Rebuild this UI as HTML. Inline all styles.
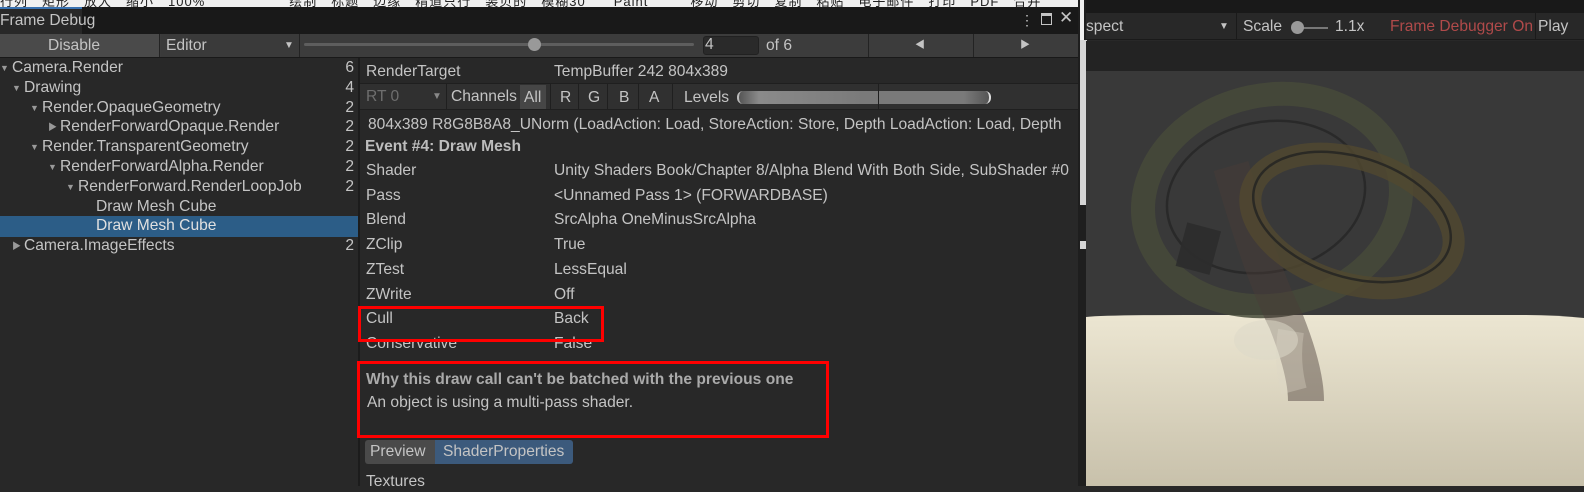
<!DOCTYPE html>
<html><head><meta charset="utf-8"><style>
*{margin:0;padding:0;box-sizing:border-box}
body{width:1584px;height:486px;overflow:hidden;background:#282828;font-family:"Liberation Sans","Noto Sans CJK SC",sans-serif;font-size:15.6px;color:#c4c4c4;position:relative}
.a{position:absolute;white-space:nowrap}
.t{line-height:20px}
.tr>div{height:19.8px;line-height:20px;overflow:hidden}
.ar{font-size:9px;color:#999;display:inline-block;width:12px;vertical-align:top;line-height:20px}
</style></head><body>
<div class="a" style="left:0;top:0;width:1080px;height:7px;background:#f0f0f0;overflow:hidden"><div class="a" style="left:0;top:-9px;font-size:13px;color:#222;letter-spacing:1px">行列　矩形　放大　缩小　100%　　　　　　绘制　标题　边缘　精道只行　装贝的　模糊30　　Paint　　　移动　剪切　复制　粘贴　电子邮件　打印　PDF　合并</div></div>
<div class="a" style="left:0;top:7px;width:1080px;height:27px;background:#191919"></div>
<div class="a" style="left:0;top:7px;width:82px;height:27px;background:#282828;border-top:2px solid #3a72b0"></div>
<div class="a t" style="left:0;top:11px;color:#c4c4c4">Frame Debug</div>
<div class="a" style="left:1020px;top:12px;color:#c4c4c4;font-size:14px">⋮</div>
<div class="a" style="left:1041px;top:13px;width:11px;height:12px;border:1px solid #c4c4c4;border-top-width:3px"></div>
<div class="a" style="left:1059px;top:8px;font-size:17px;color:#c4c4c4">✕</div>
<div class="a" style="left:0;top:34px;width:1080px;height:24px;background:#3c3c3c;border-bottom:1px solid #191919"></div>
<div class="a" style="left:0;top:34px;width:160px;height:23px;background:#4a4a4a;border-right:1px solid #232323"></div>
<div class="a t" style="left:48px;top:36px">Disable</div>
<div class="a" style="left:161px;top:34px;width:139px;height:23px;background:#3a3a3a;border-right:1px solid #232323"></div>
<div class="a t" style="left:166px;top:36px">Editor</div>
<div class="a" style="left:284px;top:37px;font-size:10px;line-height:17px">▼</div>
<div class="a" style="left:304px;top:43px;width:390px;height:3px;background:#5e5e5e;border-radius:2px"></div>
<div class="a" style="left:528px;top:38px;width:13px;height:13px;border-radius:50%;background:#999"></div>
<div class="a" style="left:703px;top:36px;width:56px;height:19px;background:#2a2a2a;border:1px solid #212121;border-radius:3px"></div>
<div class="a t" style="left:705px;top:35px">4</div>
<div class="a t" style="left:766px;top:36px">of 6</div>
<div class="a" style="left:868px;top:34px;width:1px;height:23px;background:#232323"></div>
<div class="a" style="left:973px;top:34px;width:1px;height:23px;background:#232323"></div>
<div class="a t" style="left:915px;top:36px;font-size:10px">◀</div>
<div class="a t" style="left:1020px;top:36px;font-size:10px">▶</div>
<div class="a" style="left:0;top:58px;width:358px;height:428px;background:#282828"></div>
<div class="a" style="left:358px;top:58px;width:2px;height:428px;background:#1c1c1c"></div>
<div class="a" style="left:0;top:216px;width:358px;height:21px;background:#2c5d87"></div>
<div class="a tr" style="left:0;top:58px;width:358px">
<div><span class="ar">▼</span>Camera.Render<span style="float:right;margin-right:4px">6</span></div>
<div style="padding-left:12px"><span class="ar">▼</span>Drawing<span style="float:right;margin-right:4px">4</span></div>
<div style="padding-left:30px"><span class="ar">▼</span>Render.OpaqueGeometry<span style="float:right;margin-right:4px">2</span></div>
<div style="padding-left:48px"><span class="ar">▶</span>RenderForwardOpaque.Render<span style="float:right;margin-right:4px">2</span></div>
<div style="padding-left:30px"><span class="ar">▼</span>Render.TransparentGeometry<span style="float:right;margin-right:4px">2</span></div>
<div style="padding-left:48px"><span class="ar">▼</span>RenderForwardAlpha.Render<span style="float:right;margin-right:4px">2</span></div>
<div style="padding-left:66px"><span class="ar">▼</span>RenderForward.RenderLoopJob<span style="float:right;margin-right:4px">2</span></div>
<div style="padding-left:96px">Draw Mesh Cube</div>
<div style="padding-left:96px;color:#e0e0e0">Draw Mesh Cube</div>
<div style="padding-left:12px"><span class="ar">▶</span>Camera.ImageEffects<span style="float:right;margin-right:4px">2</span></div>
</div>
<div class="a" style="left:360px;top:83px;width:720px;height:1px;background:#1f1f1f"></div>
<div class="a t" style="left:366px;top:62px">RenderTarget</div>
<div class="a t" style="left:554px;top:62px">TempBuffer 242 804x389</div>
<div class="a" style="left:360px;top:84px;width:720px;height:26px;background:#303030;border-bottom:1px solid #1f1f1f"></div>
<div class="a t" style="left:366px;top:87px;color:#6e6e6e">RT 0</div>
<div class="a" style="left:432px;top:87px;font-size:10px;line-height:20px;color:#888">▼</div>
<div class="a" style="left:446px;top:84px;width:1px;height:26px;background:#1f1f1f"></div>
<div class="a t" style="left:451px;top:87px">Channels</div>
<div class="a" style="left:520px;top:85px;width:26px;height:24px;background:#464646"></div>
<div class="a t" style="left:524px;top:88px">All</div>
<div class="a t" style="left:560px;top:88px">R</div>
<div class="a t" style="left:588px;top:88px">G</div>
<div class="a t" style="left:619px;top:88px">B</div>
<div class="a t" style="left:649px;top:88px">A</div>
<div class="a" style="left:550px;top:84px;width:1px;height:26px;background:#1f1f1f"></div>
<div class="a" style="left:578px;top:84px;width:1px;height:26px;background:#1f1f1f"></div>
<div class="a" style="left:607px;top:84px;width:1px;height:26px;background:#1f1f1f"></div>
<div class="a" style="left:638px;top:84px;width:1px;height:26px;background:#1f1f1f"></div>
<div class="a" style="left:672px;top:84px;width:1px;height:26px;background:#1f1f1f"></div>
<div class="a t" style="left:684px;top:88px">Levels</div>
<div class="a" style="left:737px;top:91px;width:254px;height:13px;border-radius:6px;background:linear-gradient(90deg,#555,#8a8a8a 8%,#7a7a7a 50%,#7a7a7a 90%,#555);border-left:2px solid #bbb;border-right:2px solid #ddd"></div>
<div class="a" style="left:878px;top:84px;width:1px;height:26px;background:#1f1f1f"></div>
<div class="a t" style="left:368px;top:115px">804x389 R8G8B8A8_UNorm (LoadAction: Load, StoreAction: Store, Depth LoadAction: Load, Depth</div>
<div class="a t" style="left:365px;top:137px;font-weight:bold;color:#bdbdbd">Event #4: Draw Mesh</div>
<div class="a t" style="left:366px;top:159px;line-height:24.7px">Shader<br>Pass<br>Blend<br>ZClip<br>ZTest<br>ZWrite<br>Cull<br>Conservative</div>
<div class="a t" style="left:554px;top:159px;line-height:24.7px">Unity Shaders Book/Chapter 8/Alpha Blend With Both Side, SubShader #0<br>&lt;Unnamed Pass 1&gt; (FORWARDBASE)<br>SrcAlpha OneMinusSrcAlpha<br>True<br>LessEqual<br>Off<br>Back<br>False</div>
<div class="a" style="left:358px;top:306px;width:246px;height:36px;border:3px solid #f00"></div>
<div class="a" style="left:357px;top:361px;width:472px;height:77px;border:3px solid #f00"></div>
<div class="a t" style="left:366px;top:370px;font-weight:bold;color:#aaa">Why this draw call can't be batched with the previous one</div>
<div class="a t" style="left:367px;top:393px">An object is using a multi-pass shader.</div>
<div class="a" style="left:365px;top:440px;width:70px;height:24px;background:#4a4a4a;border-radius:3px 0 0 3px"></div>
<div class="a" style="left:435px;top:440px;width:138px;height:24px;background:#3c5a7c;border-radius:0 3px 3px 0"></div>
<div class="a t" style="left:370px;top:442px">Preview</div>
<div class="a t" style="left:443px;top:442px">ShaderProperties</div>
<div class="a t" style="left:366px;top:472px">Textures</div>
<div class="a" style="left:1078px;top:0;width:8px;height:486px;background:#1e1e1e"></div>
<div class="a" style="left:1080px;top:0;width:4px;height:40px;background:#f0f0f0"></div>
<div class="a" style="left:1080px;top:40px;width:7px;height:165px;background:#d6d6d6"></div>
<div class="a" style="left:1080px;top:241px;width:7px;height:8px;background:#d6d6d6"></div>
<div class="a" style="left:1086px;top:0;width:498px;height:13px;background:#191919"></div>
<div class="a" style="left:1086px;top:13px;width:498px;height:27px;background:#282828;border-bottom:1px solid #1a1a1a"></div>
<div class="a t" style="left:1086px;top:17px">spect</div>
<div class="a" style="left:1219px;top:17px;font-size:10px;line-height:20px">▼</div>
<div class="a" style="left:1236px;top:13px;width:1px;height:27px;background:#1a1a1a"></div>
<div class="a t" style="left:1243px;top:17px">Scale</div>
<div class="a" style="left:1292px;top:27px;width:36px;height:2px;background:#777"></div>
<div class="a" style="left:1291px;top:21px;width:13px;height:13px;border-radius:50%;background:#999"></div>
<div class="a t" style="left:1335px;top:17px">1.1x</div>
<div class="a t" style="left:1390px;top:17px;color:#b04a4a">Frame Debugger On</div>
<div class="a" style="left:1535px;top:13px;width:1px;height:27px;background:#1a1a1a"></div>
<div class="a t" style="left:1538px;top:17px">Play</div>
<div class="a" style="left:1086px;top:41px;width:498px;height:30px;background:#232323"></div>
<div class="a" style="left:1086px;top:71px;width:498px;height:415px;background:#393939;overflow:hidden">
<svg width="498" height="415" style="position:absolute;left:0;top:0">
<defs><linearGradient id="f" x1="0" y1="0" x2="0" y2="1"><stop offset="0" stop-color="#ece6d2"/><stop offset="1" stop-color="#c8c1ab"/></linearGradient></defs>
<path d="M0 246 Q20 244 100 244 L440 244 Q470 244 498 247 L498 415 L0 415Z" fill="url(#f)"/>
<ellipse cx="186" cy="129" rx="130" ry="105" fill="none" stroke="#474a3a" stroke-width="24" opacity=".85" transform="rotate(-12 186 129)"/>
<ellipse cx="180" cy="126" rx="100" ry="75" fill="none" stroke="#262626" stroke-width="2.5" opacity=".8" transform="rotate(-12 180 126)"/>
<path d="M145 95 Q175 200 200 250 Q220 300 220 330" fill="none" stroke="#4a3c38" stroke-width="36" opacity=".45"/>
<ellipse cx="266" cy="150" rx="105" ry="62" fill="none" stroke="#51492f" stroke-width="22" opacity=".8" transform="rotate(18 266 150)"/>
<ellipse cx="266" cy="146" rx="102" ry="60" fill="none" stroke="#222" stroke-width="2.5" opacity=".8" transform="rotate(18 266 146)"/>
<path d="M205 260 Q200 290 208 320" fill="none" stroke="#ddd7c6" stroke-width="26" opacity=".35"/>
<ellipse cx="180" cy="269" rx="32" ry="20" fill="#ddd8c8" opacity=".55"/>
<rect x="95" y="155" width="35" height="45" fill="#2c2c2c" opacity=".9" transform="rotate(15 112 177)"/>
</svg></div>
</body></html>
